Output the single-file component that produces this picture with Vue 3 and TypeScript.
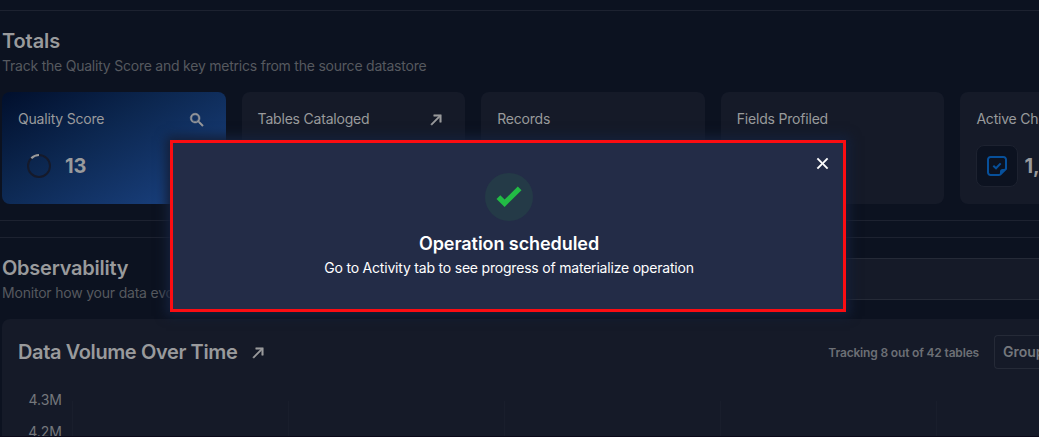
<script setup lang="ts">
interface Metric {
  title: string
  icon?: 'search' | 'arrow'
  kind?: 'score' | 'checks'
  value?: string
}

const metrics: Metric[] = [
  { title: 'Quality Score', icon: 'search', kind: 'score', value: '13' },
  { title: 'Tables Cataloged', icon: 'arrow' },
  { title: 'Records' },
  { title: 'Fields Profiled' },
  { title: 'Active Che', kind: 'checks', value: '1,' },
]
</script>

<template>
  <div class="page">
    <section class="totals">
      <h2 class="t-totals">Totals</h2>
      <p class="sub t-track">Track the Quality Score and key metrics from the source datastore</p>
      <div class="cards">
        <article v-for="m in metrics" :key="m.title" class="card" :class="m.kind">
          <header class="card-head">
            <span class="card-title">{{ m.title }}</span>
            <svg v-if="m.icon === 'search'" class="head-icon" viewBox="0 0 24 24">
              <path d="M9.5 3A6.5 6.5 0 0 1 16 9.500C16 11.110 15.410 12.590 14.440 13.730L14.710 14H15.500L20.500 19L19 20.500L14 15.500V14.710L13.730 14.440A6.500 6.500 0 1 1 9.500 3M9.500 5a4.500 4.500 0 1 0 0 9a4.500 4.500 0 1 0 0-9Z" />
            </svg>
            <svg v-if="m.icon === 'arrow'" class="head-icon" viewBox="0 0 24 24">
              <path d="M5 17.590L15.590 7H9V5H19V15H17V8.410L6.410 19Z" />
            </svg>
          </header>
          <div v-if="m.kind === 'score'" class="reading score-reading">
            <svg class="ring" viewBox="0 0 26 26">
              <circle cx="13" cy="13" r="11" class="ring-track" />
              <path d="M5.300 5.300A11 11 0 0 1 13 2" class="ring-value" />
            </svg>
            <strong>{{ m.value }}</strong>
          </div>
          <div v-if="m.kind === 'checks'" class="reading check-reading">
            <span class="tile">
              <svg viewBox="0 0 24 24">
                <path class="note" d="M14.800 21H5.500A2.500 2.500 0 0 1 3 18.500V5.500A2.500 2.500 0 0 1 5.500 3H18.500A2.500 2.500 0 0 1 21 5.500V14.800L14.800 21" />
                <path class="fold" d="M15 21V17.500A2.500 2.500 0 0 1 17.500 15H21Z" />
                <path class="note" d="M8.300 11.800L11 14.300L15.700 9.400" />
              </svg>
            </span>
            <strong>{{ m.value }}</strong>
          </div>
        </article>
      </div>
    </section>

    <section class="observability">
      <div class="obs-copy">
        <h2 class="t-obs">Observability</h2>
        <p class="sub t-monitor">Monitor how your data evolves</p>
      </div>
      <div class="filter"></div>
    </section>

    <section class="panel">
      <header class="panel-head">
        <h2 class="t-volume">Data Volume Over Time</h2>
        <svg class="head-icon" viewBox="0 0 24 24">
          <path d="M5 17.590L15.590 7H9V5H19V15H17V8.410L6.410 19Z" />
        </svg>
        <span class="tracking">Tracking 8 out of 42 tables</span>
        <span class="group">Group</span>
      </header>
      <div class="chart">
        <div class="axis"><span>4.3M</span><span>4.2M</span></div>
        <div class="grid"><i v-for="n in 5" :key="n"></i></div>
      </div>
    </section>

    <div class="dialog" role="dialog">
      <svg class="close" viewBox="0 0 24 24">
        <path d="M19 6.410L17.590 5L12 10.590L6.410 5L5 6.410L10.590 12L5 17.590L6.410 19L12 13.410L17.590 19L19 17.590L13.410 12Z" />
      </svg>
      <div class="badge">
        <svg viewBox="0 0 28 28"><path d="M1.500 16L5.300 12.200L9.600 16.500L22.800 3.500L26.500 7.200L9.600 23.900Z" /></svg>
      </div>
      <h3>Operation scheduled</h3>
      <p>Go to Activity tab to see progress of materialize operation</p>
    </div>
  </div>
</template>

<style>
html,
body {
  background: #0c1220;
  overflow: hidden;
}
</style>

<style scoped>
* {
  box-sizing: border-box;
}
.page {
  position: relative;
  width: 1039px;
  height: 437px;
  overflow: hidden;
  padding-top: 10px;
  background: #0c1220;
  border-bottom: 1px solid #0b0919;
  color: #999a9c;
  font-family: Inter, "Open Sans", sans-serif;
  white-space: nowrap;
}
h2,
h3,
p {
  margin: 0;
}
h2 {
  font-size: 20px;
  line-height: 28px;
  font-weight: 600;
}
.totals {
  height: 211px;
  border-top: 1px solid #1d2230;
  border-bottom: 1px solid #1d2230;
  padding: 16px 0 0 2px;
}
.sub {
  font-size: 14px;
  line-height: 20px;
  padding-top: 1px;
  color: #56595f;
}
.t-totals { letter-spacing: -0.1px; }
.t-track { letter-spacing: -0.225px; }
.t-obs { letter-spacing: -0.25px; }
.t-monitor { letter-spacing: -0.2px; }
.t-volume { letter-spacing: -0.38px; }
.cards {
  display: flex;
  gap: 16px;
  margin-top: 16px;
  width: 1182px;
}
.card {
  flex: 1 1 0;
  height: 112px;
  border-radius: 8px;
  background: #151a28;
  padding: 16px;
}
.card.score {
  background: linear-gradient(150deg, #010f2c 0%, #0c2750 40%, #1c4587 100%);
}
.card-head {
  display: flex;
  align-items: center;
  justify-content: space-between;
  height: 22px;
  padding-right: 4px;
}
.card-title {
  font-size: 14px;
  line-height: 22px;
  letter-spacing: -0.2px;
}
.head-icon {
  width: 18px;
  height: 18px;
  fill: #999a9c;
  stroke: #999a9c;
  stroke-width: 0.7;
  position: relative;
  top: 1px;
}
.reading {
  display: flex;
  align-items: center;
  height: 42px;
  margin-top: 15px;
}
.reading strong {
  font-size: 20px;
  font-weight: 700;
}
.score-reading {
  padding-left: 8px;
  gap: 13px;
}
.ring {
  width: 26px;
  height: 26px;
  fill: none;
}
.ring-track { stroke: #151a2b; stroke-width: 2; }
.ring-value { stroke: #999a9c; stroke-width: 2.2; }
.check-reading { gap: 6px; }
.tile {
  display: flex;
  align-items: center;
  justify-content: center;
  width: 42px;
  height: 42px;
  border: 1px solid #1d2230;
  border-radius: 8px;
  background: #0c1220;
}
.tile svg { width: 24px; height: 24px; }
.note {
  fill: none;
  stroke: #07509b;
  stroke-width: 2;
}
.fold { fill: #07509b; }

.observability {
  display: flex;
  justify-content: space-between;
  margin-top: 16px;
  border-top: 1px solid #1d2230;
  height: 82px;
  padding: 16px 0 0 2px;
}
.filter {
  width: 239px;
  height: 42px;
  margin-top: 4px;
  border-top: 1px solid #252a37;
  border-bottom: 1px solid #252a37;
  background: #151a28;
}
.panel {
  margin-left: 2px;
  height: 140px;
  border-radius: 8px 0 0 0;
  background: #151a28;
  padding: 16px 0 0 16px;
}
.panel-head {
  display: flex;
  align-items: center;
  height: 34px;
}
.panel-head .head-icon {
  margin-left: 12px;
}
.tracking {
  margin-left: auto;
  margin-right: 15px;
  font-size: 12px;
  font-weight: 600;
  letter-spacing: -0.17px;
  color: #6c6f75;
}
.group {
  width: 45px;
  height: 34px;
  border: 1px solid #252a37;
  border-right: 0;
  border-radius: 4px 0 0 4px;
  padding-left: 8px;
  overflow: hidden;
  font-size: 14px;
  line-height: 32px;
  font-weight: 600;
  color: #74777c;
}
.chart {
  display: flex;
  margin-top: 20px;
}
.axis {
  display: flex;
  flex: none;
  flex-direction: column;
  gap: 10px;
  width: 44px;
  text-align: right;
  font-size: 14px;
  line-height: 22px;
  color: #74777c;
}
.grid {
  display: flex;
  margin: 12px 0 0 10px;
}
.grid i {
  width: 216px;
  height: 50px;
  border-left: 1px solid #191e2c;
  flex: none;
}
.dialog {
  position: absolute;
  left: 170px;
  top: 140px;
  width: 676px;
  height: 172px;
  border: 3px solid #fb0d12;
  background: #232c47;
  box-shadow: 0 0 10px 4px #14203a;
  padding: 30px 0 0 2px;
  color: #fff;
  text-align: center;
}
.close {
  position: absolute;
  right: 11px;
  top: 11px;
  width: 19px;
  height: 19px;
  fill: #fff;
  stroke: #fff;
  stroke-width: 0.6;
}
.badge {
  display: flex;
  align-items: center;
  justify-content: center;
  width: 48px;
  height: 48px;
  margin: 0 auto;
  border-radius: 50%;
  background: #243a47;
}
.badge svg {
  width: 28px;
  height: 28px;
  fill: #22bb45;
}
h3 {
  font-size: 18px;
  line-height: 26px;
  font-weight: 600;
  letter-spacing: -0.07px;
  margin-top: 10px;
}
.dialog p {
  font-size: 14px;
  line-height: 20px;
  letter-spacing: -0.2px;
  margin-top: 1px;
}
</style>
